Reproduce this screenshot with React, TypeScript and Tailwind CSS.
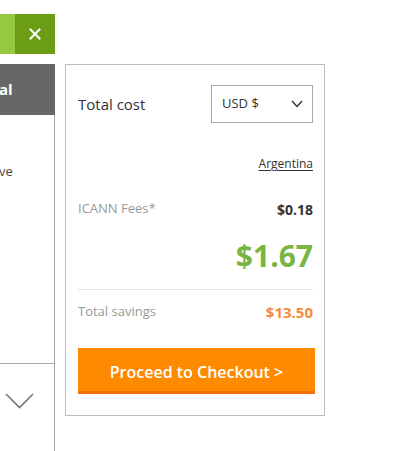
import React from "react";

export default function App() {
  return (
    <div
      className="relative w-[393px] h-[451px] overflow-hidden bg-white flex flex-col pt-[14px]"
      style={{ fontFamily: '"Open Sans", "Noto Sans", sans-serif' }}
    >
      {/* green top bar */}
      <div className="flex h-[40px] w-[55px] shrink-0">
        <div className="w-[15px] bg-[#96c93e]" />
        <div className="w-[40px] bg-[#6b9e16] flex items-center justify-center">
          <svg width="12" height="12" viewBox="0 0 12 12">
            <path d="M1.5 1.5 L10.5 10.5 M10.5 1.5 L1.5 10.5" stroke="#fff" strokeWidth="2" strokeLinecap="square" />
          </svg>
        </div>
      </div>

      <div className="flex mt-[10px] flex-1">
        {/* left panel */}
        <div className="w-[55px] flex flex-col border-r border-[#a6a6a6]">
          <div className="h-[51px] bg-[#676767] -mr-px flex items-center">
            <span className="text-white font-bold text-[15px] leading-none -ml-px">al</span>
          </div>
          <div className="mt-[47px] text-[13px] text-[#444] leading-[18px] -ml-px">ve</div>
          <div className="mt-[183px] border-t border-[#a6a6a6]" />
          <div className="mt-[29px] pl-[5px]">
            <svg width="29" height="16" viewBox="0 0 29 16">
              <path d="M1 1 L14.5 14.5 L28 1" fill="none" stroke="#777" strokeWidth="1.6" />
            </svg>
          </div>
        </div>

        {/* card */}
        <div className="ml-[10px] w-[260px] h-[352px] border border-[#bdbdbd] flex flex-col pt-[20px] pl-[12px] pr-[11px]">
          <div className="flex items-center justify-between h-[38px]">
            <span className="text-[15px] text-[#333]">Total cost</span>
            <div className="w-[102px] h-[38px] border border-[#a9a9a9] flex items-center justify-between pl-[10px] pr-[9px]">
              <span className="text-[13px] text-[#333]">USD $</span>
              <svg width="12" height="8" viewBox="0 0 12 8">
                <path d="M1 1 L6 6.5 L11 1" fill="none" stroke="#333" strokeWidth="1.4" />
              </svg>
            </div>
          </div>
          <div className="mt-[33px] flex justify-end">
            <span className="text-[12px] leading-[16px] text-[#333] underline underline-offset-2">Argentina</span>
          </div>
          <div className="mt-[28px] flex justify-between items-center h-[18px]">
            <span className="text-[13px] text-[#999]">ICANN Fees*</span>
            <span className="text-[14px] font-bold text-[#333]">$0.18</span>
          </div>
          <div className="mt-[20px] flex justify-end h-[36px] items-center">
            <span className="text-[30px] leading-[36px] font-bold text-[#79b543]">$1.67</span>
          </div>
          <div className="mt-[15px] border-t border-[#e2e2e2]" />
          <div className="mt-[13px] flex justify-between items-center h-[18px]">
            <span className="text-[13px] text-[#999]">Total savings</span>
            <span className="text-[15px] font-bold text-[#f78a3c]">$13.50</span>
          </div>
          <button className="mt-[27px] -mr-[2px] h-[46px] pt-[5px] bg-[#fe8a00] border-b-[3px] border-[#f36f0a] text-white text-[16px] font-semibold flex items-center justify-center">
            Proceed to Checkout &gt;
          </button>
        </div>
      </div>
    </div>
  );
}
